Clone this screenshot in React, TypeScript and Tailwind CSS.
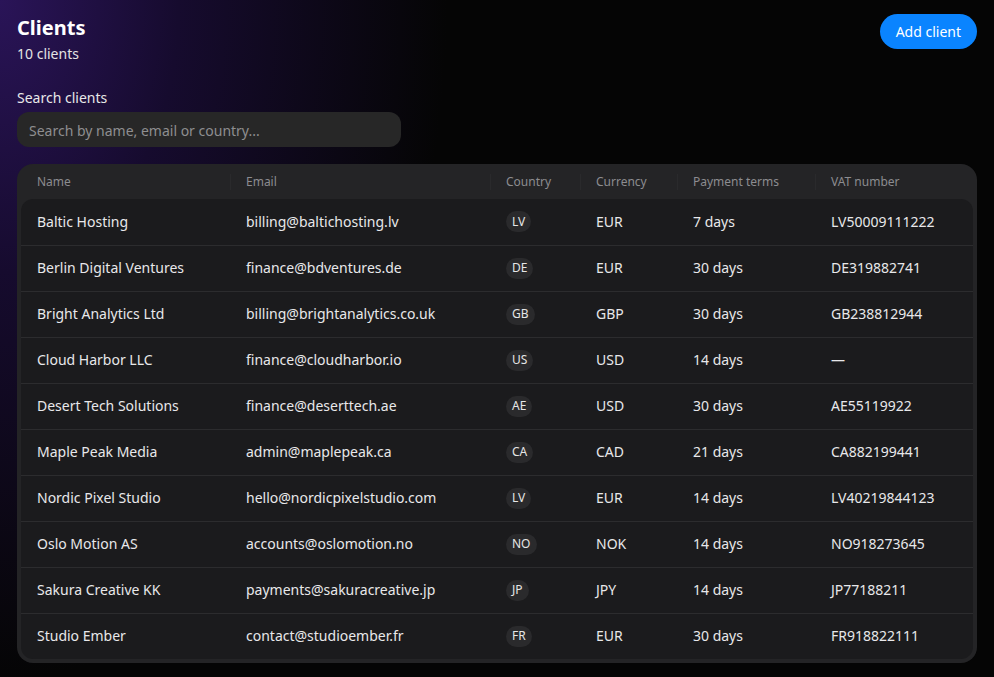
const clients = [
  { name: "Baltic Hosting", email: "billing@baltichosting.lv", country: "LV", currency: "EUR", terms: "7 days", vat: "LV50009111222" },
  { name: "Berlin Digital Ventures", email: "finance@bdventures.de", country: "DE", currency: "EUR", terms: "30 days", vat: "DE319882741" },
  { name: "Bright Analytics Ltd", email: "billing@brightanalytics.co.uk", country: "GB", currency: "GBP", terms: "30 days", vat: "GB238812944" },
  { name: "Cloud Harbor LLC", email: "finance@cloudharbor.io", country: "US", currency: "USD", terms: "14 days", vat: "—" },
  { name: "Desert Tech Solutions", email: "finance@deserttech.ae", country: "AE", currency: "USD", terms: "30 days", vat: "AE55119922" },
  { name: "Maple Peak Media", email: "admin@maplepeak.ca", country: "CA", currency: "CAD", terms: "21 days", vat: "CA882199441" },
  { name: "Nordic Pixel Studio", email: "hello@nordicpixelstudio.com", country: "LV", currency: "EUR", terms: "14 days", vat: "LV40219844123" },
  { name: "Oslo Motion AS", email: "accounts@oslomotion.no", country: "NO", currency: "NOK", terms: "14 days", vat: "NO918273645" },
  { name: "Sakura Creative KK", email: "payments@sakuracreative.jp", country: "JP", currency: "JPY", terms: "14 days", vat: "JP77188211" },
  { name: "Studio Ember", email: "contact@studioember.fr", country: "FR", currency: "EUR", terms: "30 days", vat: "FR918822111" },
];

const cols = "grid grid-cols-[209px_260px_90px_97px_138px_158px]";

export default function App() {
  return (
    <div className="min-h-[677px] bg-[#050505] bg-[radial-gradient(ellipse_45%_100%_at_0%_0%,#2a1458_0%,#160b2e_40%,#050505_100%)] px-[17px] pt-[14px] pb-4 font-['Noto_Sans',sans-serif] text-[#ececec]">
      <div className="flex items-start justify-between">
        <div className="pt-[1px]">
          <h1 className="text-[20px] font-bold leading-[26px] text-white">Clients</h1>
          <p className="text-[14px] leading-[20px] mt-[3px] text-[#e4e4e4]">10 clients</p>
        </div>
        <button className="h-[35px] rounded-full bg-[#0a84ff] px-4 text-[14px] text-white">Add client</button>
      </div>

      <label className="mt-[24px] block text-[14px] leading-[20px] text-[#e8e8e8]">Search clients</label>
      <input
        placeholder="Search by name, email or country..."
        className="mt-[4px] h-[35px] w-[384px] rounded-xl bg-[#272727] px-3 pt-[2px] text-[14px] text-white placeholder:text-[#8e8e90] outline-none"
      />

      <div className="mt-[17px] rounded-2xl bg-[#242426] px-1 pb-1">
        <div className={`${cols} h-[35px] items-center text-[12px] text-[#8c8c90]`}>
          {["Name", "Email", "Country", "Currency", "Payment terms", "VAT number"].map((h, i) => (
            <div key={h} className="flex items-center">
              {i > 0 ? <span className="h-[16px] w-px bg-[#2a2a2c]" /> : <span className="w-px" />}
              <span className="pl-[15px]">{h}</span>
            </div>
          ))}
        </div>
        <div className="rounded-xl bg-[#1b1b1d]">
          {clients.map((c, i) => (
            <div key={c.name} className={`${cols} h-[46px] items-center pb-[2px] text-[14px] text-[#e8e8ea] ${i > 0 ? "border-t border-[#2c2c2e]" : ""}`}>
              <div className="px-4">{c.name}</div>
              <div className="px-4">{c.email}</div>
              <div className="px-4">
                <span className="inline-flex h-[21px] items-center rounded-full bg-[#2a2a2c] px-[6px] text-[12px] text-[#e6e6e6]">{c.country}</span>
              </div>
              <div className="px-4">{c.currency}</div>
              <div className="px-4">{c.terms}</div>
              <div className="px-4">{c.vat}</div>
            </div>
          ))}
        </div>
      </div>
    </div>
  );
}
